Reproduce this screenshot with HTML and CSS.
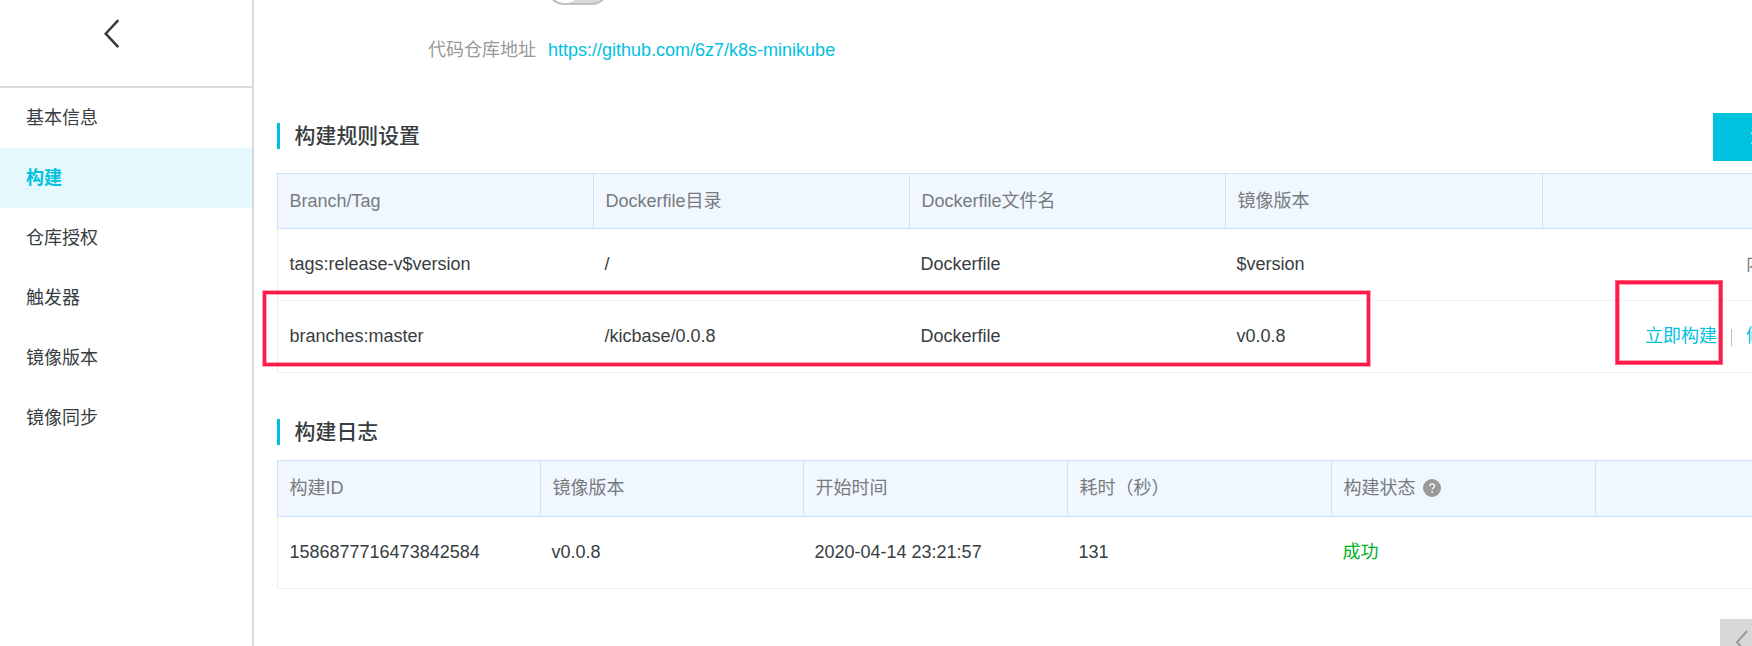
FILE: index.html
```html
<!DOCTYPE html>
<html lang="zh-CN">
<head>
<meta charset="utf-8">
<title>构建</title>
<link rel="stylesheet" href="styles.css">
</head>
<body>
<div class="app">
  <aside class="sidebar">
    <div class="back">
      <svg width="16" height="30" viewBox="0 0 16 30" fill="none" stroke="#373d41" stroke-width="2.5"><path d="M14.3 1.2 1.7 14.7 14.3 28.2"/></svg>
    </div>
    <nav class="menu">
      <a class="item">基本信息</a>
      <a class="item active">构建</a>
      <a class="item">仓库授权</a>
      <a class="item">触发器</a>
      <a class="item">镜像版本</a>
      <a class="item">镜像同步</a>
    </nav>
  </aside>
  <main class="content">
    <div class="switch-row"><span class="switch"><i class="knob"></i></span></div>
    <div class="repo"><span class="repo-label">代码仓库地址</span><a class="link">https://github.com/6z7/k8s-minikube</a></div>

    <div class="section-head rules-head"><h2 class="title">构建规则设置</h2><button class="add">添</button></div>
    <div class="table rules">
      <div class="row head"><div>Branch/Tag</div><div>Dockerfile目录</div><div>Dockerfile文件名</div><div>镜像版本</div><div></div></div>
      <div class="row"><div>tags:release-v$version</div><div>/</div><div>Dockerfile</div><div>$version</div><div class="ops builtin">内</div></div>
      <div class="row"><div>branches:master</div><div>/kicbase/0.0.8</div><div>Dockerfile</div><div>v0.0.8</div><div class="ops"><a class="link">立即构建</a><i class="sep"></i><a class="link">修</a></div></div>
    </div>

    <div class="section-head logs-head"><h2 class="title">构建日志</h2></div>
    <div class="table logs">
      <div class="row head"><div>构建ID</div><div>镜像版本</div><div>开始时间</div><div>耗时（秒）</div><div>构建状态<span class="help"><svg width="18" height="18" viewBox="0 0 18 18"><circle cx="9" cy="9" r="9" fill="#999"/><path d="M6.7 7.1c0-3 4.9-2.9 4.9-.2 0 1.8-2.4 1.8-2.4 3.7" fill="none" stroke="#f0f7ff" stroke-width="1.4"/><circle cx="9.2" cy="13" r=".9" fill="#f0f7ff"/></svg></span></div><div></div></div>
      <div class="row"><div>1586877716473842584</div><div>v0.0.8</div><div>2020-04-14 23:21:57</div><div>131</div><div class="success">成功</div><div></div></div>
    </div>
    <div class="pager"><span class="prev"><svg width="14" height="26" viewBox="0 0 14 26" fill="none" stroke="#999" stroke-width="2"><path d="M12 1 2 12.2 12 23.4"/></svg></span></div>
  </main>
  <div class="mark mark-rule"></div>
  <div class="mark mark-build"></div>
</div>
</body>
</html>
```
FILE: styles.css
```css
* { box-sizing: border-box; }
body {
  margin: 0;
  background: #fff;
  color: #373d41;
  font: 18px/24px "Liberation Sans", "Noto Sans CJK SC", sans-serif;
}
.app {
  position: relative;
  display: flex;
  width: 1752px;
  height: 646px;
  overflow: hidden;
}

.sidebar { flex: none; width: 254px; border-right: 2px solid #d9d9d9; }
.back {
  display: flex;
  justify-content: center;
  height: 88px;
  padding: 19px 28px 0 0;
  border-bottom: 2px solid #d9d9d9;
}
.item { display: flex; align-items: center; height: 60px; padding-left: 26px; }
.item.active { background: #e5f8fc; color: #00c1de; font-weight: 700; }

.content { flex: 1; min-width: 0; padding-left: 23px; overflow: hidden; }
.switch-row { display: flow-root; height: 38px; padding-left: 270px; }
.switch {
  display: block;
  width: 62px;
  height: 34px;
  margin-top: -29px;
  border: 2px solid #bfc0c3;
  border-radius: 17px;
  background: #d7d8da;
}
.knob { display: block; width: 32px; height: 30px; border-radius: 15px; background: #fff; }
.repo { display: flex; gap: 12px; height: 75px; padding-left: 151px; }
.repo-label { color: #999; }
.link { color: #00c1de; }

.section-head { display: flex; justify-content: space-between; }
.rules-head { height: 60px; }
.logs-head { height: 50px; margin-top: 37px; }
.title {
  height: 26px;
  margin: 10px 0 0;
  padding-left: 14.6px;
  border-left: 3px solid #00c1de;
  font-size: 20.9px;
  line-height: 26px;
  font-weight: 500;
}
.logs-head .title { margin-top: 9px; }
.add {
  width: 39px;
  height: 48px;
  padding: 0 0 0 37px;
  border: 0;
  overflow: hidden;
  background: #00c1de;
  color: #fff;
  font: inherit;
  text-align: left;
}

.table { border-left: 1px solid #ebecec; }
.row { display: grid; height: 72px; padding-bottom: 1px; align-items: center; border-bottom: 1px solid #f3f3f4; white-space: nowrap; }
.rules .row { grid-template-columns: 316px 316px 316px 317px 209px; }
.logs .row { grid-template-columns: 263px 263px 264px 264px 264px 156px; }
.row > div { padding-left: 10.5px; }
.row > div:first-child { padding-left: 11.5px; }
.row.head {
  height: 56px;
  margin-left: -1px;
  padding-bottom: 0;
  border: 1px solid #cae2fc;
  border-right: 0;
  background: #f0f7ff;
  color: #777b7e;
}
.logs .row.head { height: 57px; }
.row.head > div { display: flex; align-items: center; height: 100%; border-right: 1px solid #cae2fc; }
.logs .row.head > div { padding-bottom: 1.5px; }
.row.head > div + div { padding-left: 11.5px; }
.row.head > div:last-child { border-right: 0; }
.row > .ops { display: flex; align-items: center; padding-left: 102px; }
.row > .builtin { padding-left: 203px; color: #777b7e; }
.sep { flex: none; width: 1px; height: 17px; margin: 3px 14px 0 14px; background: #bbb; }
.help { display: flex; margin-left: 7px; }
.row > .success { color: #00b11d; }

.pager { display: flex; justify-content: flex-end; margin-top: 30px; }
.prev { width: 32px; height: 36px; padding: 11px 0 0 15px; background: #d7d8da; }

/* Highlight frames laid over the page */
.mark {
  position: absolute;
  border: 3px solid #ff1c4a;
  box-shadow: 0 0 0 1px rgba(255, 28, 74, .4), inset 0 0 0 1px rgba(255, 28, 74, .4);
}
.mark-rule { left: 263px; top: 291px; width: 1107px; height: 75px; }
.mark-build { left: 1616px; top: 281px; width: 106px; height: 83px; box-shadow: 0 0 0 1px rgba(255, 28, 74, .7), inset 0 0 0 1px rgba(255, 28, 74, .4); }
```
